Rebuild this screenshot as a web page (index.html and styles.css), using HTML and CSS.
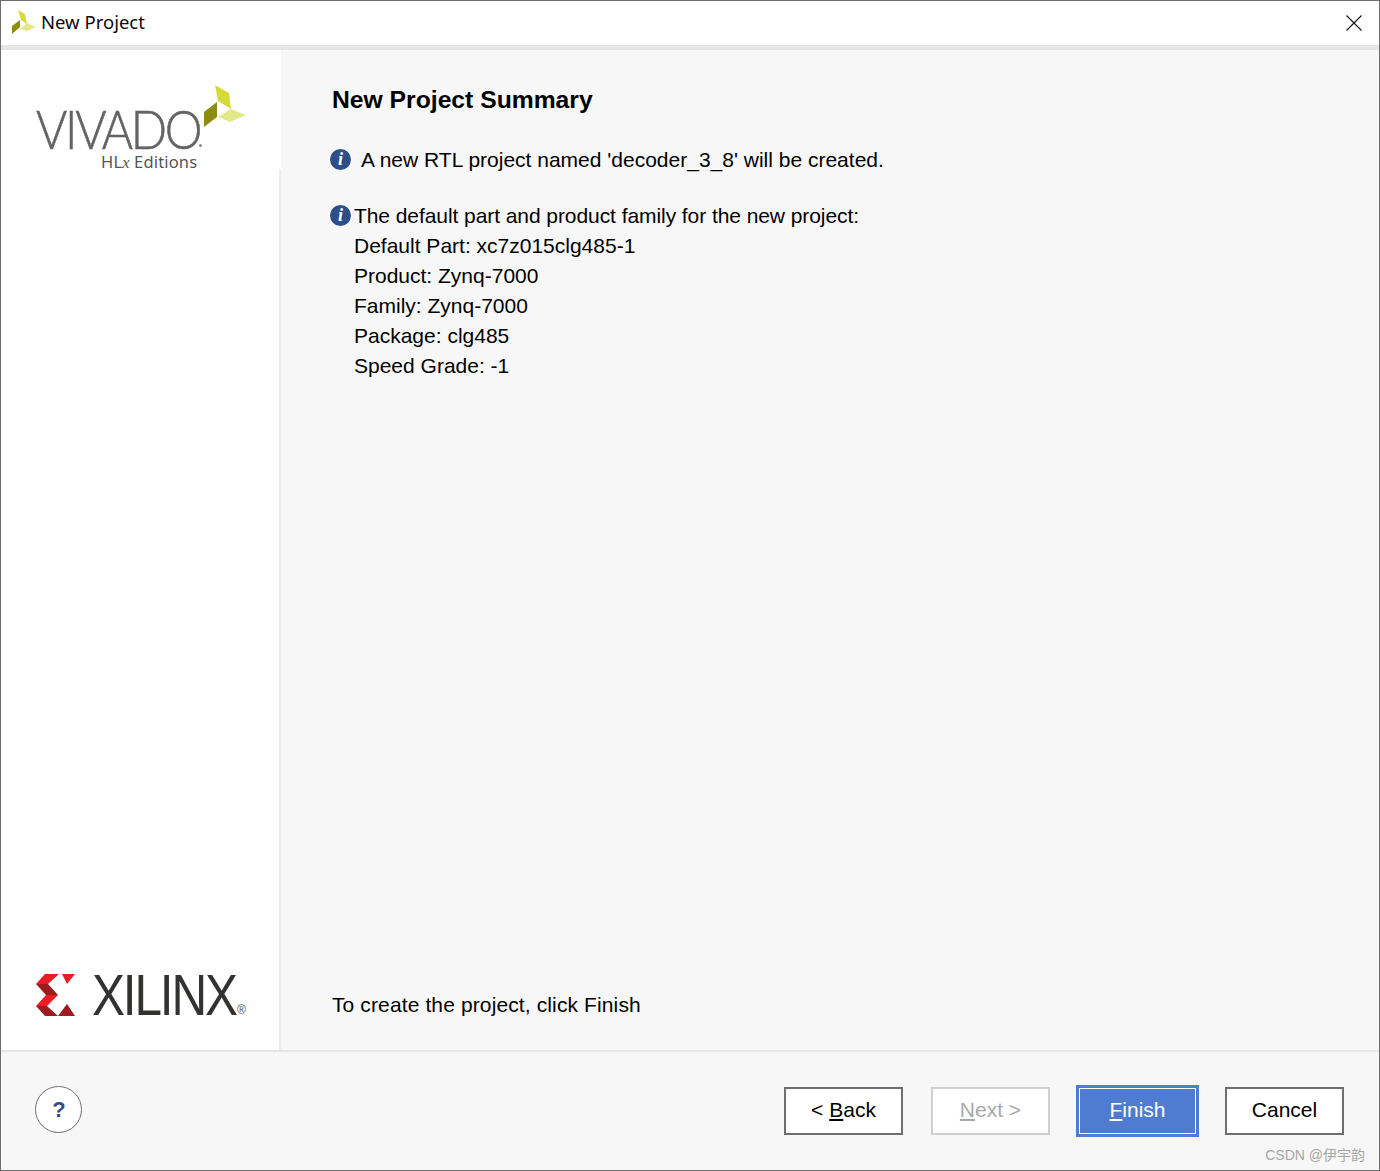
FILE: index.html
```html
<!DOCTYPE html>
<html lang="en">
<head>
<meta charset="utf-8">
<title>New Project</title>
<link rel="stylesheet" href="styles.css">
</head>
<body>
<div class="window">
  <header class="titlebar">
    <svg class="title-icon" width="24" height="26" viewBox="0 0 24 26">
      <polygon points="6,0 13,4 15,14 9,10" fill="#d5dc3a"/>
      <polygon points="0,16 8,10 8,17 0,24" fill="#8b8c10"/>
      <polygon points="8,19 15,13 24,17 15,21" fill="#e3e98a"/>
    </svg>
    <span class="title-text">New Project</span>
    <svg class="close-icon" width="16" height="16" viewBox="0 0 16 16">
      <path d="M0.5 0.5L15.5 15.5M15.5 0.5L0.5 15.5" stroke="#111" stroke-width="1.1" fill="none"/>
    </svg>
  </header>
  <div class="content">
    <aside class="sidebar">
      <div class="vivado">
        <svg class="vivado-mark" width="44" height="43" viewBox="0 0 44 43">
          <polygon points="11,0 25,8 27,24 14,16" fill="#d5dc3a"/>
          <polygon points="0,27 13,17 13,32 0,42" fill="#8b8c10"/>
          <polygon points="14,32 27,24 42,30 26,37" fill="#e3e98a"/>
        </svg>
        <div class="vivado-name">VIVADO</div>
        <span class="vivado-dot"></span>
        <div class="vivado-sub">HL<i class="hlx">x</i> Editions</div>
      </div>
      <div class="xilinx">
        <svg class="xilinx-mark" width="40" height="42" viewBox="0 0 40 42">
          <polygon points="0,10 9,0 23,0 12,10" fill="#ed1c24"/>
          <polygon points="0,10 12,10 22,21 10,21" fill="#9e1b20"/>
          <polygon points="10,21 22,21 11,32 0,32" fill="#ed1c24"/>
          <polygon points="0,32 11,32 22,42 9,42" fill="#9e1b20"/>
          <polygon points="26,0 39,0 31,10" fill="#ed1c24"/>
          <polygon points="31,30 39,42 22,42" fill="#9e1b20"/>
        </svg>
        <span class="xilinx-name">XILINX</span><span class="xilinx-reg">®</span>
      </div>
    </aside>
    <main class="main">
      <h1 class="heading">New Project Summary</h1>
      <div class="note note-first">
        <span class="info">i</span>
        <p class="note-text note-text-wide">A new RTL project named 'decoder_3_8' will be created.</p>
      </div>
      <div class="note note-second">
        <span class="info">i</span>
        <div class="note-text">
          <p class="line-tight">The default part and product family for the new project:</p>
          <p>Default Part: xc7z015clg485-1</p>
          <p>Product: Zynq-7000</p>
          <p>Family: Zynq-7000</p>
          <p>Package: clg485</p>
          <p>Speed Grade: -1</p>
        </div>
      </div>
      <p class="finish-hint">To create the project, click Finish</p>
    </main>
  </div>
  <footer class="footer">
    <button class="help" type="button">?</button>
    <div class="buttons">
      <button class="btn btn-back" type="button">&lt; <u>B</u>ack</button>
      <button class="btn btn-disabled" type="button"><u>N</u>ext &gt;</button>
      <button class="btn btn-primary" type="button"><u>F</u>inish</button>
      <button class="btn" type="button">Cancel</button>
    </div>
    <span class="watermark">CSDN @伊宇韵</span>
  </footer>
</div>
</body>
</html>
```
FILE: styles.css
```css
* { box-sizing: border-box; }
html, body { margin: 0; padding: 0; }
body { width: 1380px; height: 1171px; font-family: "Liberation Sans", Arial, sans-serif; color: #000; overflow: hidden; }
p, h1 { margin: 0; }

.window { width: 1380px; height: 1171px; border: 1px solid #6d6d6d; display: flex; flex-direction: column; background: #f7f7f7; }

.titlebar { height: 44px; flex: none; background: #fff; display: flex; align-items: center; padding: 0 17px 0 11px; }
.title-icon { flex: none; }
.title-text { font-family: "Noto Sans", sans-serif; font-size: 18.5px; line-height: 24px; margin-left: 5px; margin-top: -3px; color: #0a0a0a; }
.close-icon { margin-left: auto; }

.content { flex: 1; display: flex; min-height: 0; border-top: 5px solid #e6e6e6; border-bottom: 2px solid #e6e6e6; }

.sidebar { width: 278px; flex: none; background: #fff; position: relative; display: flex; flex-direction: column; justify-content: space-between; padding: 34px 0 33px 35px; }
.sidebar::after { content: ""; position: absolute; right: -2px; top: 119px; bottom: 0; width: 2px; background: #ececec; }
.sidebar::before { content: ""; position: absolute; right: -2px; top: 0; height: 119px; width: 2px; background: #fff; }

.vivado { position: relative; height: 90px; }
.vivado-mark { position: absolute; left: 168px; top: 1px; }
.vivado-name { position: absolute; left: 0; top: 23px; width: 164px; font-family: "Lato", sans-serif; font-weight: 300; font-size: 54px; line-height: 44px; letter-spacing: -2.6px; color: #636363; -webkit-text-stroke: 0.6px #636363; white-space: nowrap; transform: scaleX(0.885); transform-origin: left center; }
.vivado-dot { position: absolute; left: 163px; top: 60px; width: 3px; height: 3px; border-radius: 50%; background: #8a8a8a; }
.vivado-sub { position: absolute; left: 65px; top: 67px; font-family: "Noto Sans", sans-serif; font-size: 16.5px; line-height: 22px; color: #555; white-space: nowrap; letter-spacing: 0.15px; }
.hlx { font-family: "Liberation Serif", serif; }

.xilinx { display: flex; align-items: flex-end; height: 44px; }
.xilinx-mark { flex: none; margin-bottom: 1px; }
.xilinx-name { display: block; width: 145px; font-family: "Liberation Sans", sans-serif; font-size: 58px; line-height: 44px; letter-spacing: -2.5px; color: #333230; margin-left: 16px; transform: scaleX(0.853); transform-origin: left center; white-space: nowrap; }
.xilinx-reg { font-size: 12px; line-height: 14px; color: #555; }

.main { flex: 1; padding: 35px 0 0 54px; display: flex; flex-direction: column; font-size: 21px; line-height: 30px; }
.heading { font-size: 24.7px; line-height: 30px; font-weight: 700; margin-left: -1px; }
.note { display: flex; margin-left: -3px; }
.note-first { margin-top: 30px; }
.note-second { margin-top: 26px; }
.info { flex: none; width: 21px; height: 21px; margin-top: 4px; border-radius: 50%; background: #2f4e87; color: #fff; font-family: "Liberation Serif", serif; font-style: italic; font-weight: 700; font-size: 18px; line-height: 21px; text-align: center; }
.note-text { margin-left: 3px; }
.note-text-wide { margin-left: 10px; }
.line-tight { letter-spacing: -0.07px; }
.finish-hint { margin-top: auto; margin-bottom: 30px; margin-left: -1px; letter-spacing: 0.12px; }

.footer { height: 118px; flex: none; position: relative; display: flex; align-items: flex-start; padding: 34px 35px 0 34px; }
.help { width: 47px; height: 47px; border-radius: 50%; border: 1px solid #707070; background: #fff; color: #2f4e87; font-family: "Liberation Sans", sans-serif; font-weight: 700; font-size: 22px; padding: 0 0 0 1px; }
.buttons { margin-left: auto; margin-top: -1px; display: flex; align-items: center; gap: 26px; }
.btn { width: 119px; height: 48px; border: 2px solid #6f6f6f; background: #fff; color: #000; font-family: "Liberation Sans", sans-serif; font-size: 21px; padding: 0 0 2px; }
.btn-back { margin-right: 2px; }
.btn-disabled { border-color: #cfcfcf; color: #a8a8a8; }
.btn-primary { width: 123px; height: 52px; background: #4f7bd0; border: 3px solid #4f7bd0; outline: 1px solid #fff; outline-offset: -4px; color: #fff; }
.watermark { position: absolute; right: 14px; bottom: 6px; font-size: 14px; line-height: 18px; color: #a6a6a6; font-family: "Liberation Sans", "Noto Sans CJK SC", sans-serif; }
```
